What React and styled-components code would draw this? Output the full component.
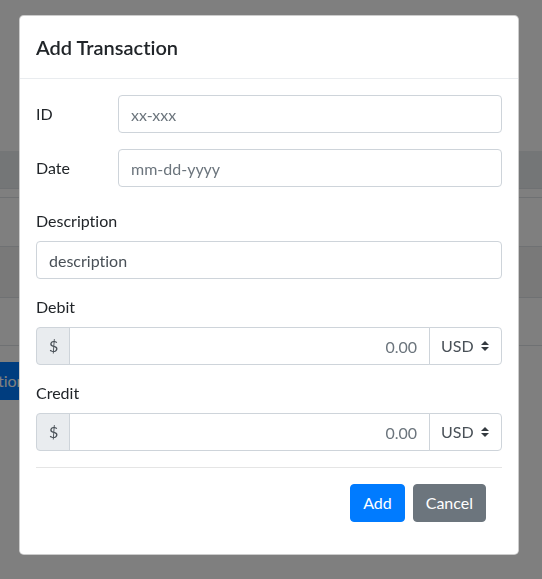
import React from "react";
import styled, { createGlobalStyle } from "styled-components";

const GlobalStyle = createGlobalStyle`
  * { box-sizing: border-box; }
  html, body {
    margin: 0;
    padding: 0;
  }
  body {
    width: 542px;
    height: 579px;
    overflow: hidden;
    background: #fff;
    color: #212529;
    font-family: Lato, "Noto Sans", "Liberation Sans", sans-serif;
    font-size: 16px;
    line-height: 1.5;
    font-variant-ligatures: none;
  }
  input, select, button {
    font-variant-ligatures: none;
  }
`;

// page behind the modal
const Page = styled.div`
  height: 579px;
  padding-top: 151px;
  background: #fff;
`;

const Table = styled.div`
  width: 100%;
`;

const TableRow = styled.div`
  height: ${(p) => p.$h}px;
  background: ${(p) => p.$bg || "transparent"};
  border-bottom: 1px solid #dee2e6;
`;

const PageButton = styled.button`
  margin: 16px 0 0 -100px;
  height: 38px;
  padding: 6px 12px;
  border: 1px solid #007bff;
  border-radius: 4px;
  background: #007bff;
  color: #fff;
  font: inherit;
`;

const Backdrop = styled.div`
  position: fixed;
  inset: 0;
  background: rgba(0, 0, 0, 0.5);
`;

// modal
const Modal = styled.div`
  position: fixed;
  top: 15px;
  left: 19px;
  width: 500px;
  background: #fff;
  border: 1px solid rgba(0, 0, 0, 0.2);
  border-radius: 4.8px;
`;

const Header = styled.div`
  padding: 16px;
  border-bottom: 1px solid #e9ecef;
`;

const Title = styled.h5`
  margin: 0;
  font-size: 20px;
  font-weight: 600;
  line-height: 30px;
  color: #212529;
`;

const Body = styled.div`
  padding: 16px;
`;

const FormRow = styled.div`
  display: flex;
  align-items: center;
  margin-bottom: ${(p) => p.$mb || 16}px;
`;

const RowLabel = styled.label`
  width: 82px;
  flex: none;
`;

const Group = styled.div`
  margin-bottom: 16px;
`;

const Label = styled.label`
  display: block;
  margin-bottom: 8px;
`;

const Input = styled.input`
  display: block;
  width: 100%;
  flex: 1;
  height: 38px;
  padding: 6px 12px;
  font: inherit;
  color: #495057;
  background: #fff;
  border: 1px solid #ced4da;
  border-radius: 4px;
  outline: none;
  &::placeholder {
    color: #6c757d;
    opacity: 1;
  }
`;

const InputGroup = styled.div`
  display: flex;
  align-items: stretch;
`;

const Addon = styled.span`
  display: flex;
  align-items: center;
  width: 34px;
  padding: 6px 12px;
  background: #e9ecef;
  color: #495057;
  border: 1px solid #ced4da;
  border-radius: 4px 0 0 4px;
`;

const AmountInput = styled(Input)`
  margin-left: -1px;
  text-align: right;
  border-radius: 0;
  min-width: 0;
`;

const Select = styled.select`
  width: 73px;
  flex: none;
  height: 38px;
  margin-left: -1px;
  padding: 6px 18px 6px 11px;
  font: inherit;
  color: #495057;
  border: 1px solid #ced4da;
  border-radius: 0 4px 4px 0;
  appearance: none;
  background: #fff
    url("data:image/svg+xml,%3csvg xmlns='http://www.w3.org/2000/svg' width='4' height='5' viewBox='0 0 4 5'%3e%3cpath fill='%23343a40' d='M2 0L0 2h4zm0 5L0 3h4z'/%3e%3c/svg%3e")
    no-repeat right 12px center / 8px 10px;
  outline: none;
`;

const Divider = styled.hr`
  margin: 0 0 16px;
  border: 0;
  border-top: 1px solid rgba(0, 0, 0, 0.1);
`;

const Actions = styled.div`
  display: flex;
  justify-content: flex-end;
  gap: 8px;
  padding-right: 16px;
  margin-bottom: 16px;
`;

const Button = styled.button`
  height: 38px;
  padding: 6px 12px;
  font: inherit;
  color: #fff;
  background: ${(p) => (p.$secondary ? "#6c757d" : "#007bff")};
  border: 1px solid ${(p) => (p.$secondary ? "#6c757d" : "#007bff")};
  border-radius: 4px;
`;

const MoneyField = ({ label }) => (
  <Group>
    <Label>{label}</Label>
    <InputGroup>
      <Addon>$</Addon>
      <AmountInput placeholder="0.00" />
      <Select defaultValue="USD">
        <option>USD</option>
      </Select>
    </InputGroup>
  </Group>
);

export default function App() {
  return (
    <>
      <GlobalStyle />
      <Page>
        <Table>
          <TableRow $h={38} $bg="#e9ecef" />
          <TableRow $h={9} />
          <TableRow $h={49} />
          <TableRow $h={51} $bg="#f2f2f2" />
          <TableRow $h={48} />
        </Table>
        <PageButton>Add Transaction</PageButton>
      </Page>
      <Backdrop />
      <Modal>
        <Header>
          <Title>Add Transaction</Title>
        </Header>
        <Body>
          <FormRow>
            <RowLabel>ID</RowLabel>
            <Input placeholder="xx-xxx" />
          </FormRow>
          <FormRow $mb={22}>
            <RowLabel>Date</RowLabel>
            <Input placeholder="mm-dd-yyyy" />
          </FormRow>
          <Group>
            <Label>Description</Label>
            <Input defaultValue="description" />
          </Group>
          <MoneyField label="Debit" />
          <MoneyField label="Credit" />
          <Divider />
          <Actions>
            <Button>Add</Button>
            <Button $secondary>Cancel</Button>
          </Actions>
        </Body>
      </Modal>
    </>
  );
}
